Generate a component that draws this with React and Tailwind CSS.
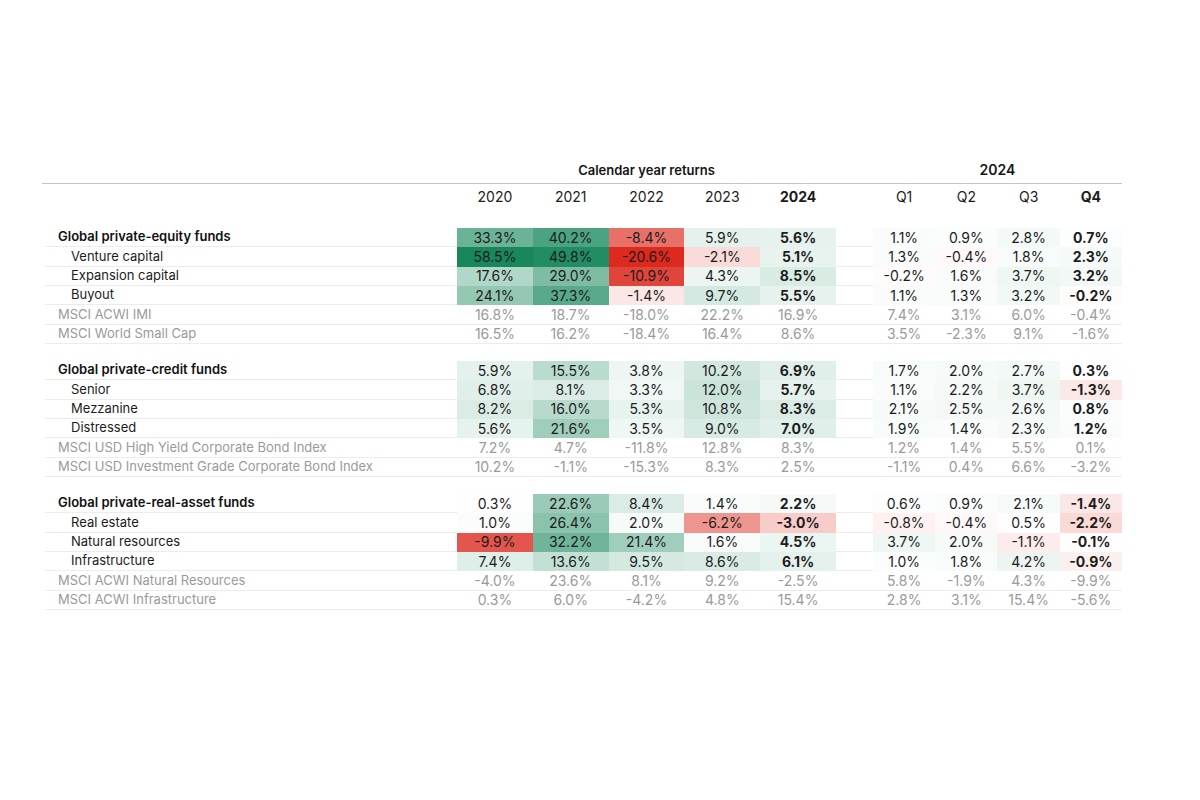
import React from "react";

const sections = [
  [
    { label: "Global private-equity funds", kind: "head", v: [33.3, 40.2, -8.4, 5.9, 5.6], q: [1.1, 0.9, 2.8, 0.7] },
    { label: "Venture capital", kind: "sub", v: [58.5, 49.8, -20.6, -2.1, 5.1], q: [1.3, -0.4, 1.8, 2.3] },
    { label: "Expansion capital", kind: "sub", v: [17.6, 29.0, -10.9, 4.3, 8.5], q: [-0.2, 1.6, 3.7, 3.2] },
    { label: "Buyout", kind: "sub", v: [24.1, 37.3, -1.4, 9.7, 5.5], q: [1.1, 1.3, 3.2, -0.2] },
    { label: "MSCI ACWI IMI", kind: "index", v: [16.8, 18.7, -18.0, 22.2, 16.9], q: [7.4, 3.1, 6.0, -0.4] },
    { label: "MSCI World Small Cap", kind: "index", v: [16.5, 16.2, -18.4, 16.4, 8.6], q: [3.5, -2.3, 9.1, -1.6] },
  ],
  [
    { label: "Global private-credit funds", kind: "head", v: [5.9, 15.5, 3.8, 10.2, 6.9], q: [1.7, 2.0, 2.7, 0.3] },
    { label: "Senior", kind: "sub", v: [6.8, 8.1, 3.3, 12.0, 5.7], q: [1.1, 2.2, 3.7, -1.3] },
    { label: "Mezzanine", kind: "sub", v: [8.2, 16.0, 5.3, 10.8, 8.3], q: [2.1, 2.5, 2.6, 0.8] },
    { label: "Distressed", kind: "sub", v: [5.6, 21.6, 3.5, 9.0, 7.0], q: [1.9, 1.4, 2.3, 1.2] },
    { label: "MSCI USD High Yield Corporate Bond Index", kind: "index", v: [7.2, 4.7, -11.8, 12.8, 8.3], q: [1.2, 1.4, 5.5, 0.1] },
    { label: "MSCI USD Investment Grade Corporate Bond Index", kind: "index", v: [10.2, -1.1, -15.3, 8.3, 2.5], q: [-1.1, 0.4, 6.6, -3.2] },
  ],
  [
    { label: "Global private-real-asset funds", kind: "head", v: [0.3, 22.6, 8.4, 1.4, 2.2], q: [0.6, 0.9, 2.1, -1.4] },
    { label: "Real estate", kind: "sub", v: [1.0, 26.4, 2.0, -6.2, -3.0], q: [-0.8, -0.4, 0.5, -2.2] },
    { label: "Natural resources", kind: "sub", v: [-9.9, 32.2, 21.4, 1.6, 4.5], q: [3.7, 2.0, -1.1, -0.1] },
    { label: "Infrastructure", kind: "sub", v: [7.4, 13.6, 9.5, 8.6, 6.1], q: [1.0, 1.8, 4.2, -0.9] },
    { label: "MSCI ACWI Natural Resources", kind: "index", v: [-4.0, 23.6, 8.1, 9.2, -2.5], q: [5.8, -1.9, 4.3, -9.9] },
    { label: "MSCI ACWI Infrastructure", kind: "index", v: [0.3, 6.0, -4.2, 4.8, 15.4], q: [2.8, 3.1, 15.4, -5.6] },
  ],
];

// white -> green / white -> red heat scale
function heat(v) {
  const end = v >= 0 ? [24, 136, 92] : [220, 42, 30];
  const t = v >= 0 ? Math.min(1, v / 52) : Math.min(1, -v / 12.5);
  const c = end.map((e) => Math.round(255 - (255 - e) * t));
  return `rgb(${c[0]},${c[1]},${c[2]})`;
}

const fmt = (v) => `${v.toFixed(1)}%`;

function Cell({ value, width, index, bold }) {
  const colored = !index;
  return (
    <div
      className={`${width} flex items-center justify-center border-b text-[14px] ${
        colored ? "border-transparent" : "border-[#ececec]"
      } ${index ? "text-[#9a9a9a]" : "text-[#1c1c1c]"} ${bold ? "font-bold" : ""}`}
      style={colored ? { backgroundColor: heat(value) } : undefined}
    >
      {fmt(value)}
    </div>
  );
}

function Row({ row }) {
  const index = row.kind === "index";
  return (
    <div className="flex h-[19.33px]">
      <div
        className={`w-[412px] flex items-center border-b border-[#ececec] ${
          row.kind === "sub" ? "pl-[26px]" : "pl-[13px]"
        } ${row.kind === "head" ? "font-semibold text-[#111]" : ""} ${
          index ? "text-[#9a9a9a]" : "text-[#1c1c1c]"
        }`}
      >
        {row.label}
      </div>
      {row.v.map((v, i) => (
        <Cell key={i} value={v} width="w-[75.8px]" index={index} bold={!index && i === 4} />
      ))}
      <div className="w-[37px] border-b border-[#ececec]" />
      {row.q.map((v, i) => (
        <Cell key={i} value={v} width="w-[62.25px]" index={index} bold={!index && i === 3} />
      ))}
    </div>
  );
}

export default function App() {
  return (
    <div className="min-h-[800px] w-[1200px] bg-white pt-[160px] font-['Inter','Liberation_Sans',sans-serif] text-[13px]">
      <div className="ml-[42px] w-[1080px]">
        <div className="flex h-[24px] border-b border-[#c4c4c4] font-semibold text-[#151515]">
          <div className="w-[415px]" />
          <div className="w-[379px] text-center leading-[20px]">Calendar year returns</div>
          <div className="w-[37px]" />
          <div className="w-[249px] text-center text-[14px] leading-[20px]">2024</div>
        </div>
        <div className="mt-[2px] flex h-[20px] items-center text-[14px] text-[#1c1c1c]">
          <div className="w-[415px]" />
          {["2020", "2021", "2022", "2023", "2024"].map((y, i) => (
            <div key={y} className={`w-[75.8px] text-center ${i === 4 ? "font-bold" : ""}`}>
              {y}
            </div>
          ))}
          <div className="w-[37px]" />
          {["Q1", "Q2", "Q3", "Q4"].map((q, i) => (
            <div key={q} className={`w-[62.25px] text-center ${i === 3 ? "font-bold" : ""}`}>
              {q}
            </div>
          ))}
        </div>
        <div className="ml-[3px] mt-[22px] flex flex-col gap-[17px]">
          {sections.map((rows, s) => (
            <div key={s}>
              {rows.map((r) => (
                <Row key={r.label} row={r} />
              ))}
            </div>
          ))}
        </div>
      </div>
    </div>
  );
}
